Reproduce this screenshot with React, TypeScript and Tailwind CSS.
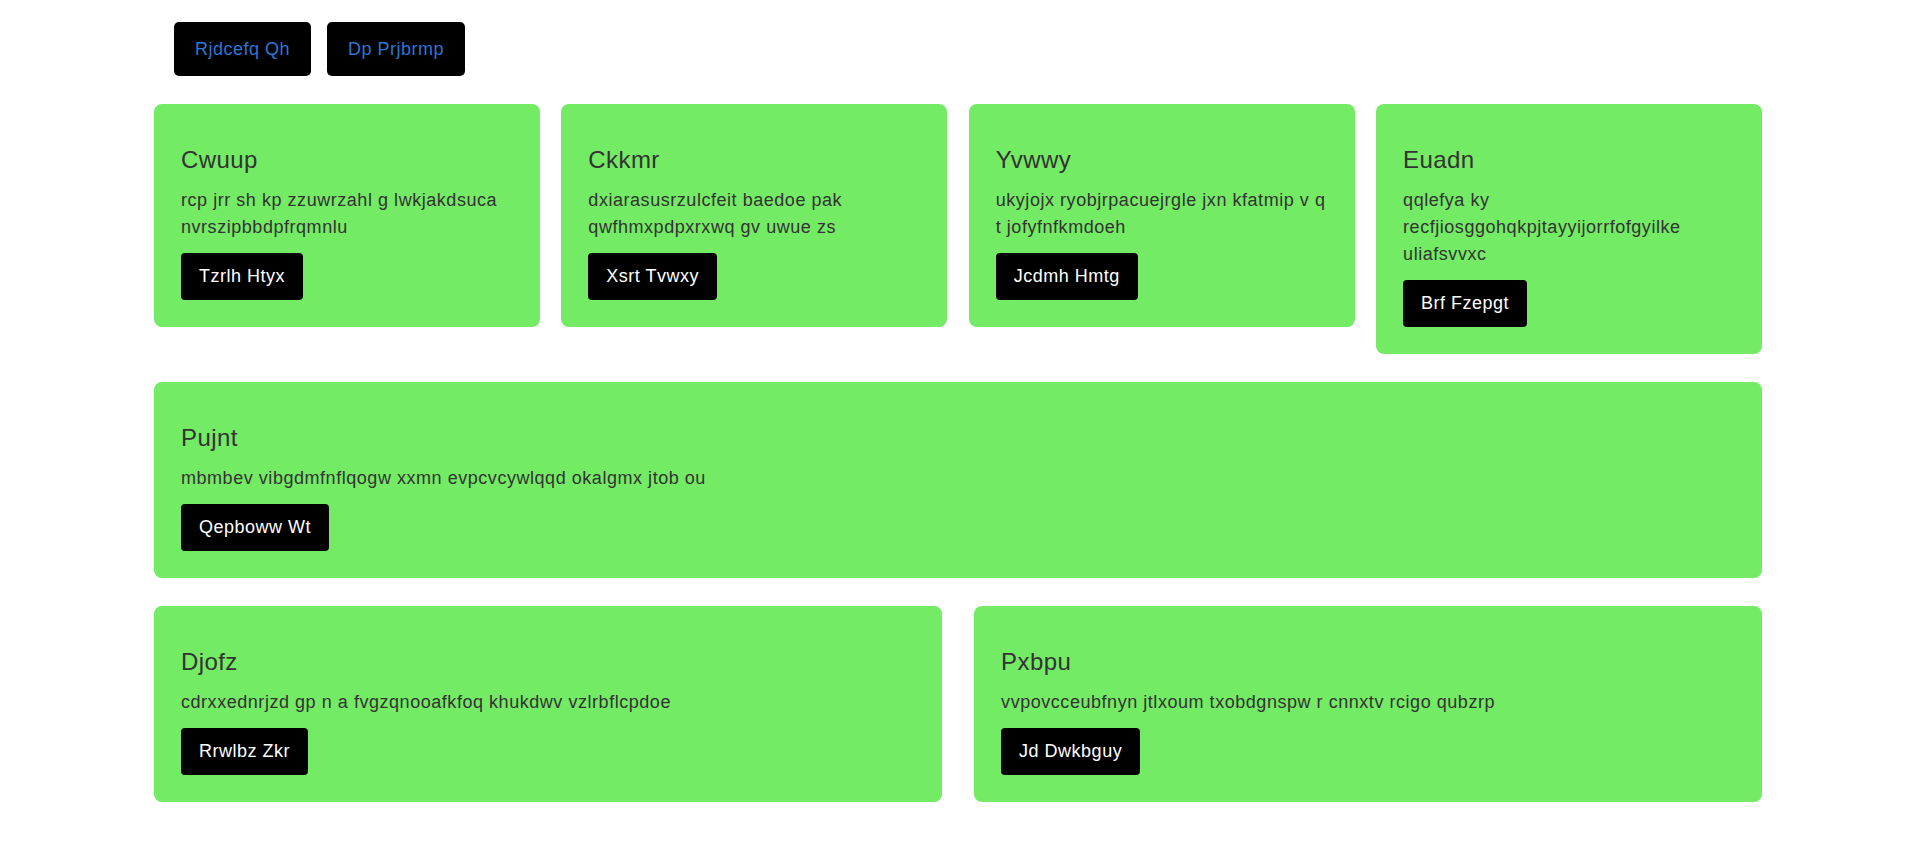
const topButtons = ['Rjdcefq Qh', 'Dp Prjbrmp'];

type Card = {
    title: string;
    text: string;
    button: string;
};

const firstRow: Card[] = [
    { title: 'Cwuup', text: 'rcp jrr sh kp zzuwrzahl g lwkjakdsuca nvrszipbbdpfrqmnlu', button: 'Tzrlh Htyx' },
    { title: 'Ckkmr', text: 'dxiarasusrzulcfeit baedoe pak qwfhmxpdpxrxwq gv uwue zs', button: 'Xsrt Tvwxy' },
    { title: 'Yvwwy', text: 'ukyjojx ryobjrpacuejrgle jxn kfatmip v q t jofyfnfkmdoeh', button: 'Jcdmh Hmtg' },
    { title: 'Euadn', text: 'qqlefya ky recfjiosggohqkpjtayyijorrfofgyilke uliafsvvxc', button: 'Brf Fzepgt' },
];

const wide: Card = {
    title: 'Pujnt',
    text: 'mbmbev vibgdmfnflqogw xxmn evpcvcywlqqd okalgmx jtob ou',
    button: 'Qepboww Wt',
};

const lastRow: Card[] = [
    { title: 'Djofz', text: 'cdrxxednrjzd gp n a fvgzqnooafkfoq khukdwv vzlrbflcpdoe', button: 'Rrwlbz Zkr' },
    { title: 'Pxbpu', text: 'vvpovcceubfnyn jtlxoum txobdgnspw r cnnxtv rcigo qubzrp', button: 'Jd Dwkbguy' },
];

function GreenCard({ card, className }: { card: Card; className: string }) {
    return (
        <div className={`bg-[#73eb64] rounded-lg px-[27px] pt-[27px] pb-[27px] ${className}`}>
            <h2 className="mt-[11px] mb-[9px] text-[24px] leading-[36px] tracking-[0.4px] text-[#333]">{card.title}</h2>
            <p className="text-[18px] leading-[27px] tracking-[0.54px] text-[#333]">{card.text}</p>
            <button className="mt-[12px] bg-black text-white rounded-[4px] px-[18px] py-[10px] text-[18px] leading-[27px] tracking-[0.5px]">
                {card.button}
            </button>
        </div>
    );
}

export default function App() {
    return (
        <div className="min-h-screen bg-white font-['Liberation_Sans',Arial,sans-serif]">
            <div className="w-[1608px] ml-[154px] pt-[22px] flex flex-col gap-[28px]">
                <div className="flex gap-4 px-5">
                    {topButtons.map((label) => (
                        <button
                            key={label}
                            className="h-[54px] px-[21px] bg-black rounded-[5px] text-[18px] tracking-[0.5px] text-[#2a78d6]"
                        >
                            {label}
                        </button>
                    ))}
                </div>

                <div className="flex justify-between items-start">
                    {firstRow.map((card) => (
                        <GreenCard key={card.title} card={card} className="w-[24%]" />
                    ))}
                </div>

                <GreenCard card={wide} className="w-full" />

                <div className="flex justify-between items-start">
                    {lastRow.map((card) => (
                        <GreenCard key={card.title} card={card} className="w-[49%]" />
                    ))}
                </div>
            </div>
        </div>
    );
}
